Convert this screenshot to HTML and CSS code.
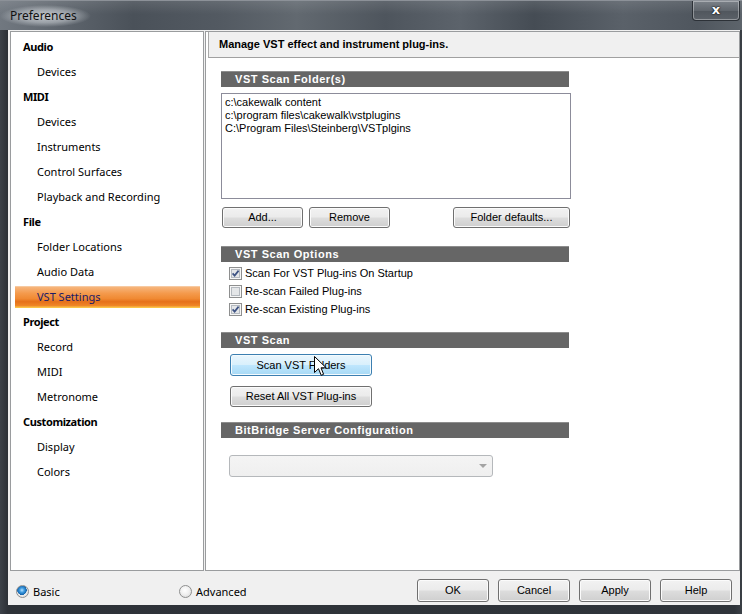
FILE: index.html
```html
<!DOCTYPE html>
<html>
<head>
<meta charset="utf-8">
<link rel="stylesheet" href="styles.css">
</head>
<body>
<div class="window">
  <div class="titlebar">
    <span class="title">Preferences</span>
    <span class="close">x</span>
  </div>
  <div class="frame">
    <div class="client">
      <div class="panels">
        <nav class="sidebar">
          <div class="item head">Audio</div>
          <div class="item sub">Devices</div>
          <div class="item head">MIDI</div>
          <div class="item sub">Devices</div>
          <div class="item sub">Instruments</div>
          <div class="item sub">Control Surfaces</div>
          <div class="item sub">Playback and Recording</div>
          <div class="item head">File</div>
          <div class="item sub">Folder Locations</div>
          <div class="item sub">Audio Data</div>
          <div class="item sub selected">VST Settings</div>
          <div class="item head">Project</div>
          <div class="item sub">Record</div>
          <div class="item sub">MIDI</div>
          <div class="item sub">Metronome</div>
          <div class="item head">Customization</div>
          <div class="item sub">Display</div>
          <div class="item sub">Colors</div>
        </nav>
        <main class="content">
          <div class="header">Manage VST effect and instrument plug-ins.</div>
          <div class="inner">
            <div class="bar">VST Scan Folder(s)</div>
            <div class="listbox">
              <div>c:\cakewalk content</div>
              <div>c:\program files\cakewalk\vstplugins</div>
              <div>C:\Program Files\Steinberg\VSTplgins</div>
            </div>
            <div class="btnrow">
              <span class="btn w80">Add...</span>
              <span class="btn w80">Remove</span>
              <span class="spacer"></span>
              <span class="btn w116">Folder defaults...</span>
            </div>

            <div class="bar gap18">VST Scan Options</div>
            <div class="checks">
              <div class="check"><svg class="cb" width="13" height="13" viewBox="0 0 13 13"><rect x="0.5" y="0.5" width="12" height="12" fill="#f6f6f6" stroke="#8e8f8f"/><rect x="2.5" y="2.5" width="8" height="8" fill="#e4e6e8" stroke="#b4b9bf"/><path d="M3.6 6.4 L5.6 8.6 L9.6 3.6" stroke="#3d5283" stroke-width="1.7" fill="none"/></svg><span>Scan For VST Plug-ins On Startup</span></div>
              <div class="check"><svg class="cb" width="13" height="13" viewBox="0 0 13 13"><rect x="0.5" y="0.5" width="12" height="12" fill="#f6f6f6" stroke="#8e8f8f"/><rect x="2.5" y="2.5" width="8" height="8" fill="#e4e6e8" stroke="#b4b9bf"/></svg><span>Re-scan Failed Plug-ins</span></div>
              <div class="check"><svg class="cb" width="13" height="13" viewBox="0 0 13 13"><rect x="0.5" y="0.5" width="12" height="12" fill="#f6f6f6" stroke="#8e8f8f"/><rect x="2.5" y="2.5" width="8" height="8" fill="#e4e6e8" stroke="#b4b9bf"/><path d="M3.6 6.4 L5.6 8.6 L9.6 3.6" stroke="#3d5283" stroke-width="1.7" fill="none"/></svg><span>Re-scan Existing Plug-ins</span></div>
            </div>

            <div class="bar gap15">VST Scan</div>
            <div class="stack">
              <span class="btn w141 hover">Scan VST Folders</span>
              <span class="btn w141">Reset All VST Plug-ins</span>
            </div>

            <div class="bar gap16">BitBridge Server Configuration</div>
            <div class="combo"><span class="arrow"></span></div>
          </div>
        </main>
      </div>
      <div class="footer">
        <label class="radio first"><span class="rb on"></span>Basic</label>
        <label class="radio"><span class="rb"></span>Advanced</label>
        <span class="spacer"></span>
        <span class="btn w72">OK</span>
        <span class="btn w72">Cancel</span>
        <span class="btn w72">Apply</span>
        <span class="btn w72">Help</span>
      </div>
    </div>
  </div>
  <svg class="cursor" width="13" height="21" viewBox="0 0 13 21"><path d="M0.5 0.5 L0.5 16.5 L4.5 12.7 L7.2 19.3 L9.6 18.3 L7 11.8 L12.2 11.8 Z" fill="#fff" stroke="#000" stroke-width="1" stroke-linejoin="miter"/></svg>
</div>
</body>
</html>
```
FILE: styles.css
```css
* { box-sizing: border-box; }
html, body { margin: 0; padding: 0; }
body { width: 742px; height: 614px; overflow: hidden; background: #1e2126; }

.window {
  position: relative;
  width: 742px;
  height: 614px;
  display: flex;
  flex-direction: column;
  background: linear-gradient(90deg, #3d4249 0%, #2e3238 1%, #2f343a 99%, #3b4046 100%);
}

.titlebar {
  height: 30px;
  flex: none;
  display: flex;
  align-items: flex-start;
  justify-content: space-between;
  background:
    linear-gradient(180deg, rgba(255,255,255,0.10) 0%, rgba(255,255,255,0) 45%),
    linear-gradient(90deg, #717880 0%, #5f666e 8%, #4a5159 18%, #535a62 30%, #626970 40%, #4e555d 52%, #5c636b 62%, #454c54 72%, #5a6169 84%, #4f565e 94%, #5d646b 100%);
  border-top: 1px solid #8c9198;
}
.title {
  font-family: "Noto Sans", "Open Sans", sans-serif;
  font-size: 12px;
  color: #111;
  margin: 4px 0 0 0;
  padding: 2px 14px 3px 10px;
  background: radial-gradient(ellipse closest-side at 50% 50%, rgba(214,218,223,0.85) 0%, rgba(200,205,210,0.55) 60%, rgba(190,195,200,0) 100%);
  line-height: 17px;
}
.close {
  width: 48px;
  height: 20px;
  margin: 0 2px 0 0;
  border: 1px solid #2c3137;
  border-top: none;
  border-radius: 0 0 4px 4px;
  box-shadow: inset 0 0 0 1px rgba(255,255,255,0.35);
  background: linear-gradient(180deg, #7b8188 0%, #60666d 50%, #50565d 51%, #5b6168 100%);
  color: #fff;
  font-family: "DejaVu Sans", sans-serif;
  font-weight: bold;
  font-size: 13px;
  line-height: 17px;
  text-align: center;
  text-shadow: 0 0 2px #000, 0 0 1px #000;
}

.frame {
  flex: 1;
  display: flex;
  padding: 0 2px 9px 8px;
}
.client {
  flex: 1;
  background: #f0f0f0;
  display: flex;
  flex-direction: column;
  padding: 1px 0 0 2px;
}
.panels {
  height: 540px;
  display: flex;
  gap: 1px;
}

.sidebar {
  width: 194px;
  background: #fff;
  border: 1px solid #9a9c9e;
  padding-top: 1px;
  font-family: "Noto Sans", "Open Sans", sans-serif;
  font-size: 11px;
  color: #000;
}
.item {
  height: 22px;
  line-height: 22px;
  margin: 3px 3px 0 4px;
  white-space: nowrap;
}
.item.head { font-weight: bold; padding-left: 8px; letter-spacing: -0.4px; }
.item.sub { padding-left: 22px; }
.item.selected {
  color: #1b1b68;
  background: linear-gradient(180deg, #f6b57c 0%, #f49a4c 30%, #f08a33 55%, #e5701a 70%, #ef8526 88%, #f7b243 95%, #ffd24a 100%);
  border-top: 1px solid #f7c9a0;
  line-height: 20px;
}

.content {
  width: 535px;
  background: #fff;
  border: 1px solid #9a9c9e;
  display: flex;
  flex-direction: column;
}
.header {
  margin-left: 2px;
  height: 26px;
  background: #f0f0f0;
  border-left: 1px solid #a9a9a9;
  border-bottom: 1px solid #a0a0a0;
  font-family: "Liberation Sans", Arial, sans-serif;
  font-weight: bold;
  font-size: 11px;
  line-height: 25px;
  padding-left: 10px;
  color: #000;
}
.inner {
  padding: 13px 0 0 15px;
  font-family: "Liberation Sans", Arial, sans-serif;
  font-size: 11px;
  color: #000;
  display: flex;
  flex-direction: column;
  align-items: flex-start;
}
.bar {
  width: 348px;
  height: 16px;
  background: #666;
  border-top: 1px solid #8d8d8d;
  color: #fff;
  font-family: "Liberation Sans", Arial, sans-serif;
  font-weight: bold;
  font-size: 11px;
  letter-spacing: 0.55px;
  line-height: 14px;
  padding-left: 14px;
}
.gap18 { margin-top: 18px; }
.gap15 { margin-top: 14px; }
.gap16 { margin-top: 15px; }

.listbox {
  margin-top: 6px;
  width: 350px;
  height: 106px;
  border: 1px solid #8c8c9a;
  padding: 2px 0 0 3px;
  line-height: 13px;
}

.btnrow {
  margin-top: 8px;
  width: 349px;
  display: flex;
  gap: 6px;
  padding-left: 1px;
}
.spacer { flex: 1; }

.btn {
  display: inline-block;
  height: 21px;
  border: 1px solid #707070;
  border-radius: 3px;
  background: linear-gradient(180deg, #f2f2f2 0%, #ebebeb 48%, #dddddd 52%, #cfcfcf 100%);
  box-shadow: inset 0 0 0 1px #fbfbfb;
  font-family: "Liberation Sans", Arial, sans-serif;
  font-size: 11px;
  line-height: 19px;
  text-align: center;
  color: #000;
}
.btn.hover {
  border-color: #3c7fb1;
  background: linear-gradient(180deg, #eaf6fd 0%, #d9f0fc 48%, #bee6fd 52%, #a7d9f5 100%);
  box-shadow: inset 0 0 0 1px #f4fbfe;
  height: 22px;
  line-height: 20px;
}
.w80 { width: 81px; }
.w116 { width: 117px; }
.w141 { width: 142px; }
.w72 { width: 72px; }

.checks {
  margin-top: 2px;
  padding-left: 8px;
  display: flex;
  flex-direction: column;
}
.check {
  height: 18px;
  display: flex;
  align-items: center;
  gap: 3px;
  white-space: nowrap;
}
.cb { flex: none; }

.stack {
  margin-top: 6px;
  padding-left: 9px;
  display: flex;
  flex-direction: column;
  gap: 10px;
}

.combo {
  position: relative;
  margin: 17px 0 0 8px;
  width: 264px;
  height: 22px;
  border: 1px solid #b5b8bb;
  border-radius: 3px;
  background: linear-gradient(180deg, #f4f4f4, #efefef);
}
.arrow {
  position: absolute;
  right: 5px;
  top: 8px;
  width: 0;
  height: 0;
  border-left: 4px solid transparent;
  border-right: 4px solid transparent;
  border-top: 4px solid #a3a3a3;
}

.footer {
  flex: 1;
  display: flex;
  align-items: center;
  padding: 4px 8px 0 0;
  gap: 9px;
}
.radio {
  display: flex;
  align-items: center;
  gap: 4px;
  font-family: "Noto Sans", "Open Sans", sans-serif;
  font-size: 11px;
  color: #000;
  width: 160px;
  padding-top: 3px;
}
.radio.first { padding-left: 6px; }
.rb {
  width: 13px;
  height: 13px;
  border-radius: 50%;
  border: 1px solid #8e8f8f;
  background: radial-gradient(circle at 45% 40%, #ffffff 0%, #f1f1f1 45%, #d4d4d4 100%);
  flex: none;
}
.rb.on {
  background:
    radial-gradient(circle at 45% 38%, #b5e0ff 0%, #3d9be0 25%, #1565ad 50%, rgba(20,90,160,0) 54%),
    radial-gradient(circle at 45% 40%, #ffffff 0%, #f1f1f1 45%, #d4d4d4 100%);
}
.footer .btn { height: 23px; line-height: 21px; }

.cursor {
  position: absolute;
  left: 314px;
  top: 356px;
}
```
